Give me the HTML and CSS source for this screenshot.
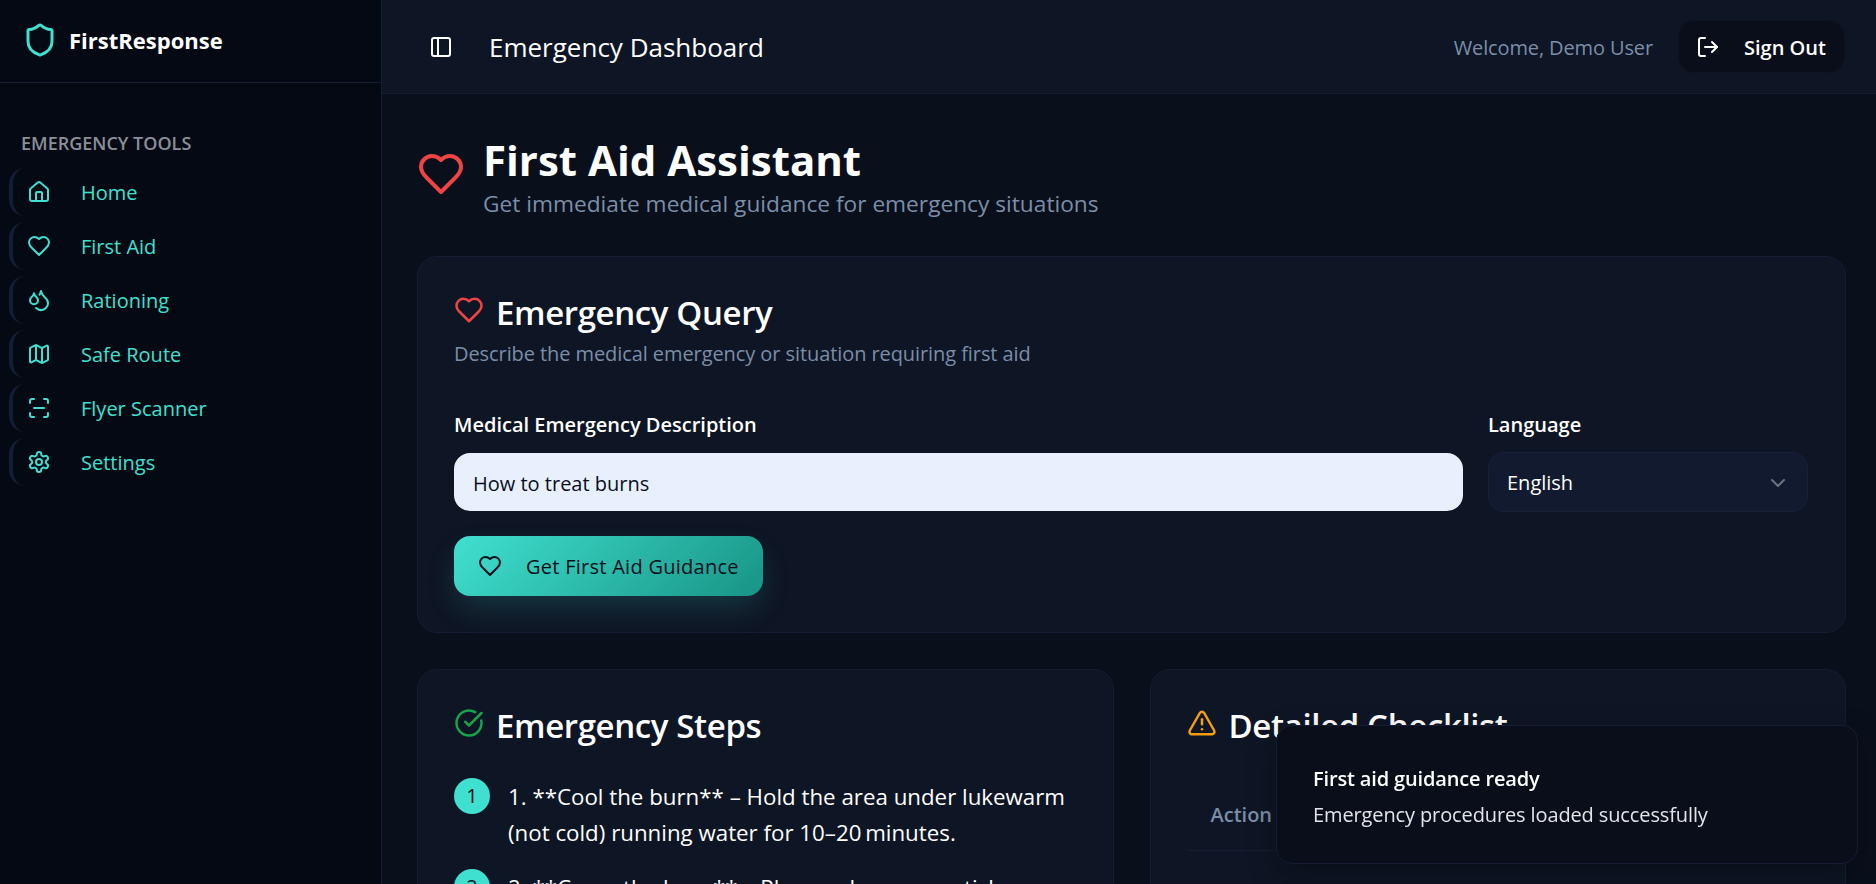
FILE: index.html
```html
<!DOCTYPE html>
<html lang="en">
<head>
    <meta charset="UTF-8">
    <meta name="viewport" content="width=device-width, initial-scale=1.0">
    <title>FirstResponse - First Aid Assistant</title>
    <link rel="stylesheet" href="styles.css">
</head>
<body>
    <div class="app">
        <aside class="sidebar">
            <div class="brand">
                <svg class="brand-icon" viewBox="0 0 24 24"><path d="M20 13c0 5-3.5 7.5-7.66 8.95a1 1 0 0 1-.67-.01C7.5 20.5 4 18 4 13V6a1 1 0 0 1 1-1c2 0 4.5-1.2 6.24-2.72a1.17 1.17 0 0 1 1.52 0C14.51 3.81 17 5 19 5a1 1 0 0 1 1 1z"/></svg>
                <span class="brand-name">FirstResponse</span>
            </div>
            <nav class="nav">
                <div class="nav-label">EMERGENCY TOOLS</div>
                <a class="nav-item">
                    <svg class="icon" viewBox="0 0 24 24"><path d="M15 21v-8a1 1 0 0 0-1-1h-4a1 1 0 0 0-1 1v8"/><path d="M3 10a2 2 0 0 1 .709-1.528l7-5.999a2 2 0 0 1 2.582 0l7 5.999A2 2 0 0 1 21 10v9a2 2 0 0 1-2 2H5a2 2 0 0 1-2-2z"/></svg>
                    <span>Home</span>
                </a>
                <a class="nav-item">
                    <svg class="icon" viewBox="0 0 24 24"><path d="M19 14c1.49-1.46 3-3.21 3-5.5A5.5 5.5 0 0 0 16.5 3c-1.76 0-3 .5-4.5 2-1.5-1.5-2.74-2-4.5-2A5.5 5.5 0 0 0 2 8.5c0 2.3 1.5 4.05 3 5.5l7 7Z"/></svg>
                    <span>First Aid</span>
                </a>
                <a class="nav-item">
                    <svg class="icon" viewBox="0 0 24 24"><path d="M7 16.3c2.2 0 4-1.83 4-4.05 0-1.16-.57-2.26-1.71-3.19S7.29 6.75 7 5.3c-.29 1.45-1.14 2.84-2.29 3.76S3 11.1 3 12.25c0 2.22 1.8 4.05 4 4.05z"/><path d="M12.56 6.6A10.97 10.97 0 0 0 14 3.02c.5 2.5 2 4.9 4 6.5s3 3.5 3 5.5a6.98 6.98 0 0 1-11.91 4.97"/></svg>
                    <span>Rationing</span>
                </a>
                <a class="nav-item">
                    <svg class="icon" viewBox="0 0 24 24"><path d="M14.106 5.553a2 2 0 0 0 1.788 0l3.659-1.83A1 1 0 0 1 21 4.619v12.764a1 1 0 0 1-.553.894l-4.553 2.277a2 2 0 0 1-1.788 0l-4.212-2.106a2 2 0 0 0-1.788 0l-3.659 1.83A1 1 0 0 1 3 19.381V6.618a1 1 0 0 1 .553-.894l4.553-2.277a2 2 0 0 1 1.788 0z"/><path d="M15 5.764v15"/><path d="M9 3.236v15"/></svg>
                    <span>Safe Route</span>
                </a>
                <a class="nav-item">
                    <svg class="icon" viewBox="0 0 24 24"><path d="M3 7V5a2 2 0 0 1 2-2h2"/><path d="M17 3h2a2 2 0 0 1 2 2v2"/><path d="M21 17v2a2 2 0 0 1-2 2h-2"/><path d="M7 21H5a2 2 0 0 1-2-2v-2"/><path d="M7 12h10"/></svg>
                    <span>Flyer Scanner</span>
                </a>
                <a class="nav-item">
                    <svg class="icon" viewBox="0 0 24 24"><path d="M12.22 2h-.44a2 2 0 0 0-2 2v.18a2 2 0 0 1-1 1.73l-.43.25a2 2 0 0 1-2 0l-.15-.08a2 2 0 0 0-2.73.73l-.22.38a2 2 0 0 0 .73 2.73l.15.1a2 2 0 0 1 1 1.72v.51a2 2 0 0 1-1 1.74l-.15.09a2 2 0 0 0-.73 2.73l.22.38a2 2 0 0 0 2.73.73l.15-.08a2 2 0 0 1 2 0l.43.25a2 2 0 0 1 1 1.73V20a2 2 0 0 0 2 2h.44a2 2 0 0 0 2-2v-.18a2 2 0 0 1 1-1.73l.43-.25a2 2 0 0 1 2 0l.15.08a2 2 0 0 0 2.73-.73l.22-.39a2 2 0 0 0-.73-2.73l-.15-.08a2 2 0 0 1-1-1.74v-.5a2 2 0 0 1 1-1.74l.15-.09a2 2 0 0 0 .73-2.73l-.22-.38a2 2 0 0 0-2.73-.73l-.15.08a2 2 0 0 1-2 0l-.43-.25a2 2 0 0 1-1-1.73V4a2 2 0 0 0-2-2z"/><circle cx="12" cy="12" r="3"/></svg>
                    <span>Settings</span>
                </a>
            </nav>
        </aside>

        <div class="main">
            <header class="topbar">
                <div class="topbar-left">
                    <svg class="icon" viewBox="0 0 24 24"><rect x="3" y="3" width="18" height="18" rx="2"/><path d="M9 3v18"/></svg>
                    <h2 class="topbar-title">Emergency Dashboard</h2>
                </div>
                <div class="topbar-right">
                    <span class="welcome">Welcome, Demo User</span>
                    <button class="signout">
                        <svg class="icon" viewBox="0 0 24 24"><path d="M9 21H5a2 2 0 0 1-2-2V5a2 2 0 0 1 2-2h4"/><path d="m16 17 5-5-5-5"/><path d="M21 12H9"/></svg>
                        <span class="signout-text">Sign Out</span>
                    </button>
                </div>
            </header>

            <main class="content">
                <div class="page-head">
                    <svg class="page-icon" viewBox="0 0 24 24"><path d="M19 14c1.49-1.46 3-3.21 3-5.5A5.5 5.5 0 0 0 16.5 3c-1.76 0-3 .5-4.5 2-1.5-1.5-2.74-2-4.5-2A5.5 5.5 0 0 0 2 8.5c0 2.3 1.5 4.05 3 5.5l7 7Z"/></svg>
                    <div>
                        <h1>First Aid Assistant</h1>
                        <p class="page-sub">Get immediate medical guidance for emergency situations</p>
                    </div>
                </div>

                <section class="card">
                    <h3 class="card-title">
                        <svg class="title-icon red" viewBox="0 0 24 24"><path d="M19 14c1.49-1.46 3-3.21 3-5.5A5.5 5.5 0 0 0 16.5 3c-1.76 0-3 .5-4.5 2-1.5-1.5-2.74-2-4.5-2A5.5 5.5 0 0 0 2 8.5c0 2.3 1.5 4.05 3 5.5l7 7Z"/></svg>
                        <span>Emergency Query</span>
                    </h3>
                    <p class="card-sub">Describe the medical emergency or situation requiring first aid</p>
                    <div class="form-row">
                        <div class="form-group grow">
                            <label for="query">Medical Emergency Description</label>
                            <input id="query" type="text" value="How to treat burns">
                        </div>
                        <div class="form-group lang">
                            <label>Language</label>
                            <div class="select">
                                <span>English</span>
                                <svg class="chevron" viewBox="0 0 24 24"><path d="m6 9 6 6 6-6"/></svg>
                            </div>
                        </div>
                    </div>
                    <button class="primary">
                        <svg class="icon" viewBox="0 0 24 24"><path d="M19 14c1.49-1.46 3-3.21 3-5.5A5.5 5.5 0 0 0 16.5 3c-1.76 0-3 .5-4.5 2-1.5-1.5-2.74-2-4.5-2A5.5 5.5 0 0 0 2 8.5c0 2.3 1.5 4.05 3 5.5l7 7Z"/></svg>
                        <span>Get First Aid Guidance</span>
                    </button>
                </section>

                <div class="columns">
                    <section class="card">
                        <h3 class="card-title">
                            <svg class="title-icon green" viewBox="0 0 24 24"><path d="M21.801 10A10 10 0 1 1 17 3.335"/><path d="m9 11 3 3L22 4"/></svg>
                            <span>Emergency Steps</span>
                        </h3>
                        <ol class="steps">
                            <li class="step">
                                <span class="step-num">1</span>
                                <span class="step-text">1. **Cool the burn** – Hold the area under lukewarm (not cold) running water for 10–20&#8201;minutes.</span>
                            </li>
                            <li class="step">
                                <span class="step-num">2</span>
                                <span class="step-text">2. **Cover the burn** – Place a clean, non‑stick dressing over the area.</span>
                            </li>
                        </ol>
                    </section>
                    <section class="card">
                        <h3 class="card-title">
                            <svg class="title-icon amber" viewBox="0 0 24 24"><path d="m21.73 18-8-14a2 2 0 0 0-3.48 0l-8 14A2 2 0 0 0 4 21h16a2 2 0 0 0 1.73-3"/><path d="M12 9v4"/><path d="M12 17h.01"/></svg>
                            <span>Detailed Checklist</span>
                        </h3>
                        <table class="checklist">
                            <thead>
                                <tr><th>Action</th></tr>
                            </thead>
                        </table>
                    </section>
                </div>
            </main>
        </div>
    </div>

    <div class="toast">
        <div class="toast-title">First aid guidance ready</div>
        <div class="toast-desc">Emergency procedures loaded successfully</div>
    </div>
</body>
</html>
```

FILE: styles.css
```css
* {
    box-sizing: border-box;
}
html, body {
    height: 100%;
    margin: 0;
    overflow: hidden;
}
body {
    font-family: "Open Sans", "Noto Sans", sans-serif;
    font-size: 20px;
    background-color: #0a0f1c;
    color: #ffffff;
}
svg {
    fill: none;
    stroke: currentColor;
    stroke-width: 2;
    stroke-linecap: round;
    stroke-linejoin: round;
    flex-shrink: 0;
}
.icon {
    width: 24px;
    height: 24px;
}
.app {
    display: flex;
    height: 884px;
    overflow: hidden;
}

/* Sidebar */
.sidebar {
    width: 382px;
    flex-shrink: 0;
    background-color: #050914;
    border-right: 1px solid #141d33;
}
.brand {
    display: flex;
    align-items: center;
    gap: 11px;
    height: 83px;
    padding: 0 0 2px 22px;
    border-bottom: 1px solid #141d33;
}
.brand-icon {
    width: 36px;
    height: 36px;
    color: #40e0d0;
}
.brand-name {
    font-size: 22px;
    font-weight: 700;
}
.nav {
    display: flex;
    flex-direction: column;
    gap: 6px;
    padding: 48px 0 0 9px;
}
.nav-label {
    margin: 0 0 7px 12px;
    font-size: 18px;
    line-height: 24px;
    font-weight: 600;
    color: #8a8f98;
}
.nav-item {
    display: flex;
    align-items: center;
    gap: 30px;
    width: 364px;
    height: 48px;
    padding-left: 14px;
    border-left: 4px solid #131e36;
    border-radius: 16px;
    color: #40e0d0;
}

/* Top bar */
.main {
    flex: 1;
    min-width: 0;
}
.topbar {
    display: flex;
    align-items: center;
    justify-content: space-between;
    height: 94px;
    padding: 0 31px 0 47px;
    background-color: #0e1524;
    border-bottom: 1px solid #141d33;
}
.topbar-left {
    display: flex;
    align-items: center;
    gap: 36px;
}
.topbar-title {
    margin: 0;
    font-size: 26px;
    font-weight: 500;
}
.topbar-right {
    display: flex;
    align-items: center;
    gap: 25px;
}
.welcome {
    padding-top: 2px;
    color: #7a8ea8;
    letter-spacing: -0.12px;
}
.signout {
    display: flex;
    align-items: center;
    gap: 24px;
    width: 167px;
    height: 53px;
    padding: 0 0 0 17px;
    background-color: #0a0e1a;
    border: 1px solid #0d1320;
    border-radius: 16px;
    color: #ffffff;
    font: inherit;
    font-weight: 600;
}
.signout-text {
    padding-top: 2px;
}

/* Page */
.content {
    padding: 36px 30px 0 35px;
}
.page-head {
    display: flex;
    align-items: center;
    gap: 18px;
    height: 88px;
    margin-bottom: 38px;
}
.page-icon {
    width: 48px;
    height: 48px;
    color: #ef4444;
}
h1 {
    margin: 0;
    font-size: 42px;
    line-height: 60px;
    font-weight: 700;
}
.page-sub {
    margin: 0;
    font-size: 22.7px;
    line-height: 28px;
    color: #7a8ea8;
}
.card {
    background-color: #0e1524;
    border: 1px solid #141d33;
    border-radius: 20px;
    padding: 36px;
}
.card-title {
    display: flex;
    align-items: center;
    gap: 12px;
    margin: 0;
    font-size: 33px;
    line-height: 40px;
    font-weight: 600;
    letter-spacing: -0.37px;
}
.title-icon {
    width: 30px;
    height: 30px;
    margin-top: -6px;
}
.red { color: #ef4444; }
.green { color: #16a34a; }
.amber { color: #f59e0b; }
.card-sub {
    margin: 8px 0 0;
    color: #7a8ea8;
    line-height: 26px;
    letter-spacing: -0.08px;
}
.form-row {
    display: flex;
    gap: 25px;
    margin-top: 45px;
    padding-right: 1px;
}
.form-group label {
    display: block;
    margin-bottom: 16px;
    font-weight: 600;
    line-height: 25px;
}
.grow {
    flex: 1;
}
.lang {
    width: 320px;
}
.form-group input[type="text"] {
    display: block;
    width: 100%;
    height: 58px;
    padding: 2px 19px 0;
    border: none;
    border-radius: 16px;
    background-color: #e8f0fe;
    color: #0a0f1c;
    font: inherit;
    outline: none;
}
.select {
    display: flex;
    align-items: center;
    justify-content: space-between;
    height: 60px;
    margin-top: -1px;
    padding: 1px 17px 0 18px;
    background-color: #111a2e;
    border: 1px solid #16213a;
    border-radius: 16px;
}
.chevron {
    width: 24px;
    height: 24px;
    color: #6b7280;
}
.primary {
    display: flex;
    align-items: center;
    gap: 24px;
    width: 309px;
    height: 60px;
    margin-top: 24px;
    padding: 0 0 0 24px;
    border: none;
    border-radius: 16px;
    background: linear-gradient(135deg, #40e0d0, #189485);
    box-shadow: 0 14px 32px -4px rgba(64, 224, 208, 0.18);
    color: #0a0f1c;
    font: inherit;
    font-weight: 500;
    letter-spacing: 0.27px;
}
.columns {
    display: grid;
    grid-template-columns: 1fr 1fr;
    gap: 36px;
    margin-top: 36px;
}
.columns .card {
    height: 400px;
}
.steps {
    list-style: none;
    margin: 32px 0 0;
    padding: 0;
}
.step {
    display: flex;
    gap: 18px;
    margin-bottom: 18px;
    font-size: 22.3px;
    line-height: 36px;
}
.step-text {
    padding-top: 1px;
}
.step-num {
    display: flex;
    align-items: center;
    justify-content: center;
    flex-shrink: 0;
    width: 36px;
    height: 36px;
    border-radius: 50%;
    background-color: #40e0d0;
    color: #0a0f1c;
    font-size: 20px;
}
.checklist {
    width: 100%;
    margin-top: 34px;
    border-collapse: collapse;
}
.checklist th {
    height: 70px;
    padding: 0 24px;
    text-align: left;
    font-weight: 600;
    color: #7a8ea8;
    border-bottom: 1px solid #141d33;
}

/* Toast */
.toast {
    position: fixed;
    right: 18px;
    bottom: 20px;
    width: 582px;
    height: 139px;
    padding: 40px 36px;
    background-color: #0a0e1a;
    border: 1px solid #141d33;
    border-radius: 16px;
    box-shadow: 0 10px 30px rgba(0, 0, 0, 0.3);
}
.toast-title {
    font-weight: 600;
    line-height: 25px;
    letter-spacing: -0.15px;
}
.toast-desc {
    margin-top: 11px;
    line-height: 25px;
    color: #e2e4e9;
    letter-spacing: -0.12px;
}
```
